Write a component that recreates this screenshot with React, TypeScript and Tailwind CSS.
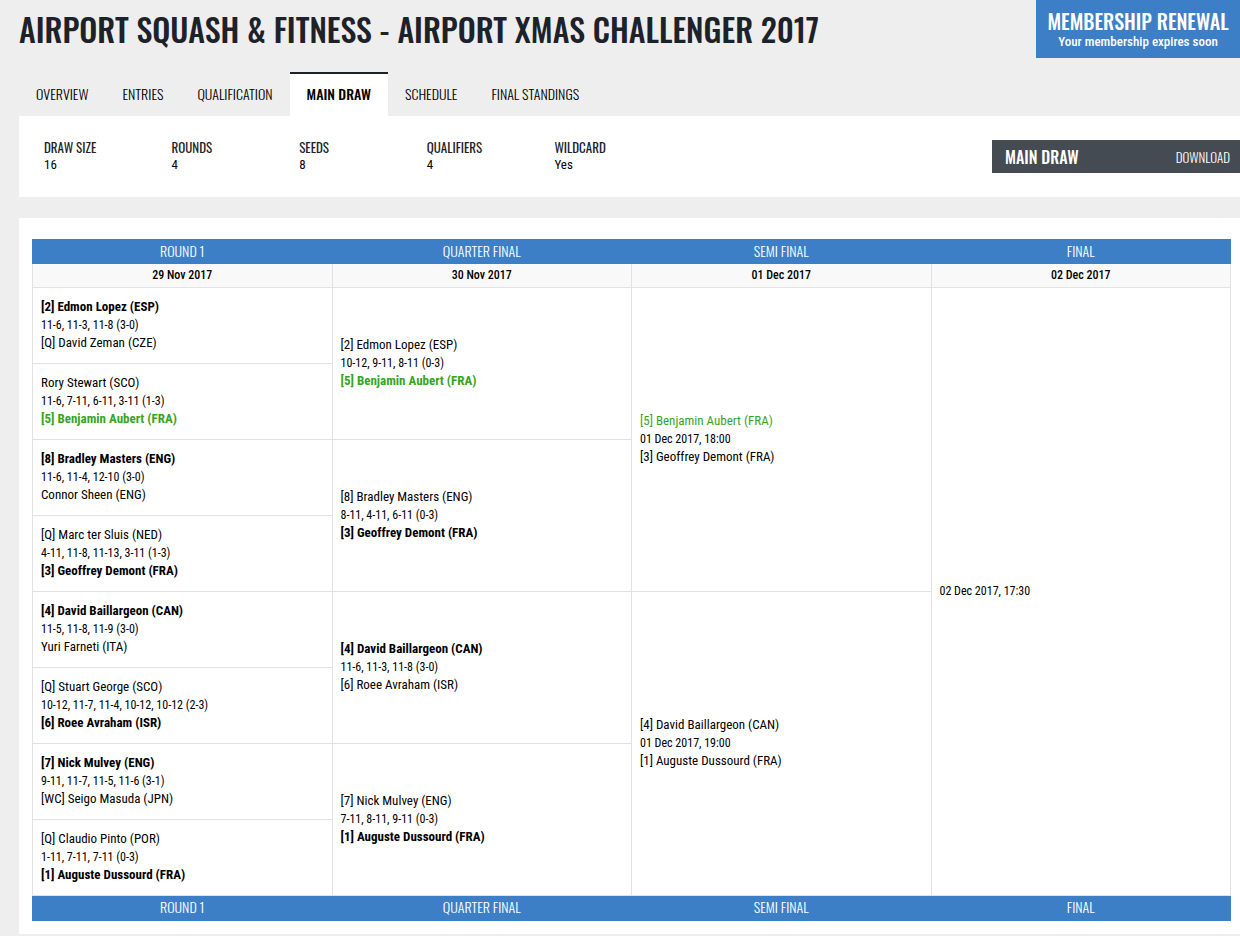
import clsx from "clsx";

interface Side {
  name: string;
  winner?: boolean;
  highlight?: boolean;
}

interface Match {
  top?: Side;
  info: string;
  bottom?: Side;
}

const tabs = ["Overview", "Entries", "Qualification", "Main Draw", "Schedule", "Final Standings"];

const details = [
  { label: "Draw size", value: "16" },
  { label: "Rounds", value: "4" },
  { label: "Seeds", value: "8" },
  { label: "Qualifiers", value: "4" },
  { label: "Wildcard", value: "Yes" },
];

const rounds: { title: string; date: string; matches: Match[] }[] = [
  {
    title: "Round 1",
    date: "29 Nov 2017",
    matches: [
      { top: { name: "[2] Edmon Lopez (ESP)", winner: true }, info: "11-6, 11-3, 11-8 (3-0)", bottom: { name: "[Q] David Zeman (CZE)" } },
      { top: { name: "Rory Stewart (SCO)" }, info: "11-6, 7-11, 6-11, 3-11 (1-3)", bottom: { name: "[5] Benjamin Aubert (FRA)", winner: true, highlight: true } },
      { top: { name: "[8] Bradley Masters (ENG)", winner: true }, info: "11-6, 11-4, 12-10 (3-0)", bottom: { name: "Connor Sheen (ENG)" } },
      { top: { name: "[Q] Marc ter Sluis (NED)" }, info: "4-11, 11-8, 11-13, 3-11 (1-3)", bottom: { name: "[3] Geoffrey Demont (FRA)", winner: true } },
      { top: { name: "[4] David Baillargeon (CAN)", winner: true }, info: "11-5, 11-8, 11-9 (3-0)", bottom: { name: "Yuri Farneti (ITA)" } },
      { top: { name: "[Q] Stuart George (SCO)" }, info: "10-12, 11-7, 11-4, 10-12, 10-12 (2-3)", bottom: { name: "[6] Roee Avraham (ISR)", winner: true } },
      { top: { name: "[7] Nick Mulvey (ENG)", winner: true }, info: "9-11, 11-7, 11-5, 11-6 (3-1)", bottom: { name: "[WC] Seigo Masuda (JPN)" } },
      { top: { name: "[Q] Claudio Pinto (POR)" }, info: "1-11, 7-11, 7-11 (0-3)", bottom: { name: "[1] Auguste Dussourd (FRA)", winner: true } },
    ],
  },
  {
    title: "Quarter Final",
    date: "30 Nov 2017",
    matches: [
      { top: { name: "[2] Edmon Lopez (ESP)" }, info: "10-12, 9-11, 8-11 (0-3)", bottom: { name: "[5] Benjamin Aubert (FRA)", winner: true, highlight: true } },
      { top: { name: "[8] Bradley Masters (ENG)" }, info: "8-11, 4-11, 6-11 (0-3)", bottom: { name: "[3] Geoffrey Demont (FRA)", winner: true } },
      { top: { name: "[4] David Baillargeon (CAN)", winner: true }, info: "11-6, 11-3, 11-8 (3-0)", bottom: { name: "[6] Roee Avraham (ISR)" } },
      { top: { name: "[7] Nick Mulvey (ENG)" }, info: "7-11, 8-11, 9-11 (0-3)", bottom: { name: "[1] Auguste Dussourd (FRA)", winner: true } },
    ],
  },
  {
    title: "Semi Final",
    date: "01 Dec 2017",
    matches: [
      { top: { name: "[5] Benjamin Aubert (FRA)", highlight: true }, info: "01 Dec 2017, 18:00", bottom: { name: "[3] Geoffrey Demont (FRA)" } },
      { top: { name: "[4] David Baillargeon (CAN)" }, info: "01 Dec 2017, 19:00", bottom: { name: "[1] Auguste Dussourd (FRA)" } },
    ],
  },
  {
    title: "Final",
    date: "02 Dec 2017",
    matches: [{ info: "02 Dec 2017, 17:30" }],
  },
];

const heading = "font-[family-name:Oswald,'Roboto_Condensed',sans-serif] uppercase";

function Player({ side }: { side: Side }) {
  return (
    <div className={clsx(side.winner && "font-bold", side.highlight && "text-[#35a51e]")}>{side.name}</div>
  );
}

function RoundTitles({ className }: { className: string }) {
  return (
    <tr className={clsx("bg-[#3d7fc6] text-white", className)}>
      {rounds.map((round) => (
        <th
          key={round.title}
          scope="col"
          className={clsx(heading, "border-x border-[#3d7fc6] p-0 pb-[2px] text-[14px] leading-[22px] font-light")}
        >
          {round.title}
        </th>
      ))}
    </tr>
  );
}

function DrawTable() {
  const rowCount = rounds[0].matches.length;

  return (
    <table className="w-full table-fixed border-collapse">
      <thead>
        <RoundTitles className="h-[25px]" />
        <tr className="h-[23px] bg-[#f9f9f9]">
          {rounds.map((round) => (
            <td key={round.date} className="border border-t-0 border-[#e2e2e2] p-0 text-center text-[12px] font-medium">
              {round.date}
            </td>
          ))}
        </tr>
      </thead>
      <tbody>
        {rounds[0].matches.map((_, row) => (
          <tr key={row} className="h-[76px]">
            {rounds.map((round) => {
              // a match covers as many rows as first round matches feed into it
              const span = rowCount / round.matches.length;
              if (row % span !== 0) return null;
              const match = round.matches[row / span];
              return (
                <td key={round.title} rowSpan={span} className="border border-[#e2e2e2] px-2 py-0 align-middle">
                  {match.top && <Player side={match.top} />}
                  <div className="text-[12px]">{match.info}</div>
                  {match.bottom && <Player side={match.bottom} />}
                </td>
              );
            })}
          </tr>
        ))}
      </tbody>
      <tfoot>
        <RoundTitles className="h-[26px]" />
      </tfoot>
    </table>
  );
}

export default function App() {
  return (
    <div className="min-h-screen overflow-x-hidden bg-[#eee] pb-[2px] pl-[19px] font-[family-name:'Roboto_Condensed',Roboto,sans-serif] text-[13px] leading-[18px] text-black">
      <header className="flex h-[72px] items-start justify-between">
        <h1 className={clsx(heading, "pt-[7px] text-[32px] leading-[44px] font-medium text-[#1d222a]")}>
          Airport Squash &amp; Fitness - Airport Xmas Challenger 2017
        </h1>
        <a href="#renew" className="flex h-[58px] w-[204px] flex-col items-center bg-[#3d7fc6] pt-2 whitespace-nowrap text-white">
          <span className={clsx(heading, "text-[20px] leading-[26px] font-medium")}>Membership renewal</span>
          <span className="leading-4 font-medium">Your membership expires soon</span>
        </a>
      </header>

      <nav className="flex h-11">
        {tabs.map((tab) => (
          <a
            key={tab}
            href={"#" + tab.toLowerCase().replace(" ", "-")}
            className={clsx(
              heading,
              "border-t-2 px-[17px] text-[14px] leading-10",
              tab === "Main Draw" ? "border-[#1d222a] bg-white font-medium" : "border-transparent font-light"
            )}
          >
            {tab}
          </a>
        ))}
      </nav>

      <section className="flex h-[81px] items-start justify-between bg-white pt-6 pl-[25px]">
        <dl className="grid max-w-[638px] flex-1 grid-cols-5">
          {details.map((item) => (
            <div key={item.label}>
              <dt className={clsx(heading, "pb-[2px] text-[13px] leading-[14px] text-[#1d222a]")}>{item.label}</dt>
              <dd>{item.value}</dd>
            </div>
          ))}
        </dl>
        <a href="#download" className={clsx(heading, "flex h-[33px] w-[248px] items-center justify-between bg-[#454b53] pr-[10px] pl-[13px] text-white")}>
          <span className="text-[16px] font-medium">Main Draw</span>
          <span className="text-[13px] font-light">Download</span>
        </a>
      </section>

      <main className="mt-[21px] bg-white pt-[21px] pr-[9px] pb-[13px] pl-[13px]">
        <DrawTable />
      </main>
    </div>
  );
}
